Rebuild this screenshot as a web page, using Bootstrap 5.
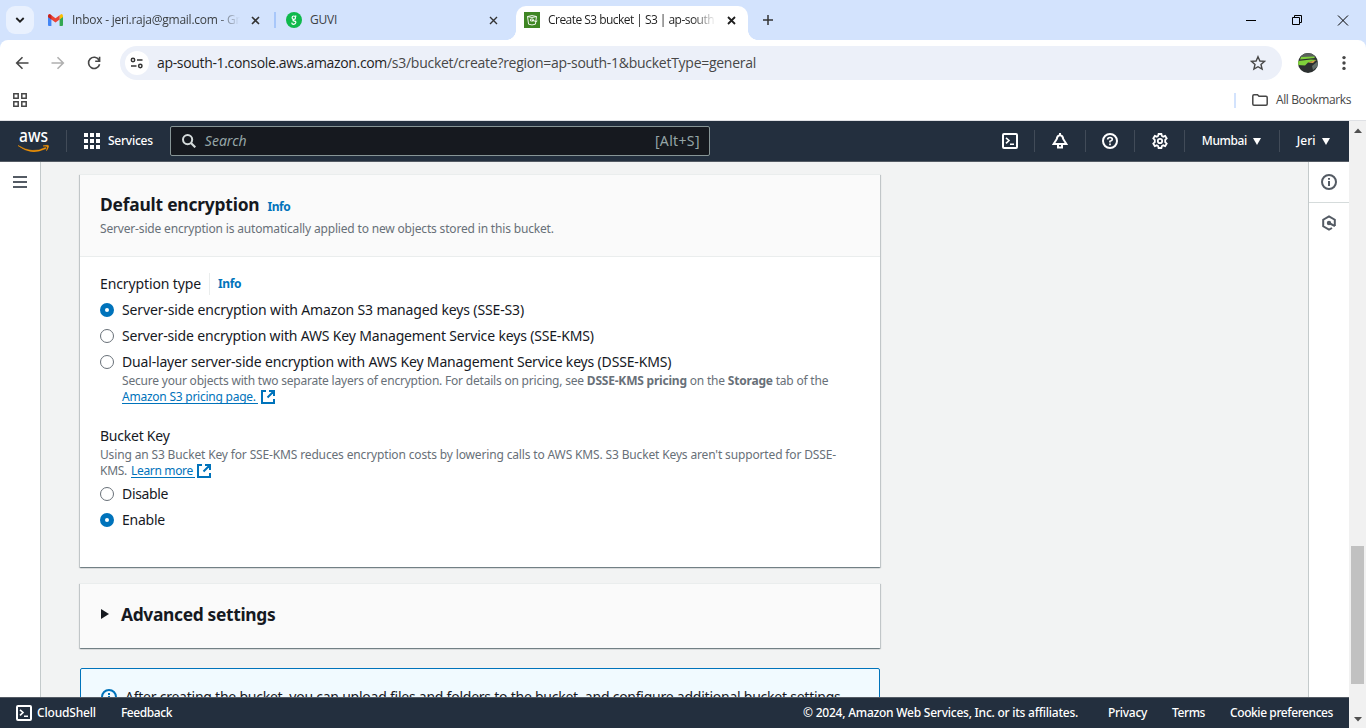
<!DOCTYPE html>
<html lang="en">
<head>
<meta charset="utf-8">
<title>Create S3 bucket</title>
<link href="https://cdn.jsdelivr.net/npm/bootstrap@5.3.0/dist/css/bootstrap.min.css" rel="stylesheet">
<style>
html,body{height:728px;overflow:hidden}
body{width:1366px;font-family:"Noto Sans",sans-serif;font-size:14px;line-height:22px;color:#16191f;background:#fff}
svg{display:block;flex:none}
span,a{white-space:nowrap}
/* browser frame */
.chrome-ui{font-family:"Open Sans",sans-serif;color:#1f1f1f}
.tabstrip{height:40px;background:#d3e3fd;font-size:12px}
.tabmenu{width:28px;height:28px;border-radius:9px;background:#e9f1fe;margin:6px 0 0 6px}
.tab-item{height:40px;width:241px;color:#3c4043}
.tab-on{width:232px;height:34px;margin-top:6px;padding:0 0 6px 8px;background:#fff;border-radius:10px 10px 0 0;position:relative}
.tab-on::before,.tab-on::after{content:"";position:absolute;bottom:0;width:10px;height:10px}
.tab-on::before{left:-10px;background:radial-gradient(circle at 0 0,#d3e3fd 9.6px,#fff 10.2px)}
.tab-on::after{right:-10px;background:radial-gradient(circle at 100% 0,#d3e3fd 9.6px,#fff 10.2px)}
.tab-sep{width:2px;height:16px;background:#a8c7fa;margin:0 10px 0 -1px}
.fade-txt{width:168px;overflow:hidden;-webkit-mask-image:linear-gradient(90deg,#000 86%,transparent);mask-image:linear-gradient(90deg,#000 86%,transparent)}
.toolbar{height:46px;background:#d3e3fd}
.toolbar-in{background:#fff;border-radius:8px 8px 0 0}
.omni{width:1162px;height:34px;border-radius:17px;background:#ecf0f9;font-size:14px}
.site-btn{width:24px;height:24px;border-radius:50%;background:#fff;margin-left:5px}
.bookbar{height:35px;border-bottom:1px solid #dfe1e5;font-size:12px;color:#474747}
/* console bars */
.aws-top{height:41px;background:#232f3e;border-bottom:1px solid #545b64;color:#fff;font-size:12px;font-weight:500}
.vsep{width:1px;height:22px;background:#414b58}
.aws-search{width:540px;height:30px;margin-left:17px;background:#16191f;border:1px solid #879596;border-radius:2px;color:#95a5a6;font-size:14px;font-weight:400}
.aws-foot{height:31px;background:#232f3e;border-top:1px solid #545b64;color:#fff;font-size:12px;font-weight:500}
.page-col{width:1349px}
.side-l{width:41px;border-right:1px solid #c4cacb}
.side-r{width:41px;border-left:1px solid #c4cacb}
/* form */
.work{background:#f2f3f3;height:535px;overflow:hidden;padding:12px 0 0 39px}
.panel-box{width:800px;background:#fff;border-top:1px solid #eaeded;box-shadow:0 1px 1px 0 rgba(0,28,36,.35),1px 1px 1px 0 rgba(0,28,36,.15),-1px 1px 1px 0 rgba(0,28,36,.15)}
.panel-head{background:#fafafa;border-bottom:1px solid #eaeded;height:82px;padding:18px 20px}
.t18{font-size:17.4px;font-weight:700;line-height:22px}
.hint{font-size:12px;line-height:16px;color:#687078}
.info-l{font-size:12px;font-weight:700;color:#0073bb;letter-spacing:-.4px}
.lnk{color:#0073bb;border-bottom:1px solid #0073bb;height:15px;line-height:16px;display:inline-block}
.rad{width:14px;height:14px;border-radius:50%;border:1px solid #687078;background:#fff;flex:none}
.rad.on{border:5px solid #0073bb}
.opt{height:22px;margin-bottom:4px;gap:8px}
.note-box{width:800px;height:60px;margin-top:20px;border:1px solid #0073bb;background:#f1faff;border-radius:2px;padding:17px 20px}
.sbar{width:17px;background:#f1f1f1}
.thumb{width:13px;height:138px;margin-top:413px;background:#c1c1c1}
/* tracking */
.k08{letter-spacing:-.08px}.k12{letter-spacing:-.122px}.k14{letter-spacing:-.143px}.k148{letter-spacing:-.148px}.k16{letter-spacing:-.163px}
.k17{letter-spacing:-.171px}.k20{letter-spacing:-.203px}.k22{letter-spacing:-.22px}.k24{letter-spacing:-.238px}.k275{letter-spacing:-.275px}
.k30{letter-spacing:-.3px}.k33{letter-spacing:-.334px}.k38{letter-spacing:-.383px}.k42{letter-spacing:-.415px}.k54{letter-spacing:-.539px}
.p35{letter-spacing:.35px}
</style>
</head>
<body>
<div class="chrome-ui">
 <div class="tabstrip d-flex">
  <div class="tabmenu d-flex align-items-center justify-content-center"><svg width="10" height="8" viewBox="0 0 10 8"><path d="M1.300 2 5 5.700 8.700 2" fill="none" stroke="#1f1f1f" stroke-width="1.800"/></svg></div>
  <div class="tab-item d-flex align-items-center" style="padding-left:14px">
   <svg width="15" height="12" viewBox="0 0 15 12"><path d="M0 2v9q0 1 1 1h2.400V5z" fill="#4285f4"/><path d="M15 2v9q0 1-1 1h-2.400V5z" fill="#34a853"/><path d="M11.600 1.200V5.600L15 3V1.800Q14.600-.7 12.600.4z" fill="#fbbc04"/><path d="M0 3V1.800Q.4-.7 2.400.4L7.500 4.200 11.600 1.200V5.600L7.500 8.600 3.400 5.600z" fill="#ea4335"/><path d="M0 3V1.800Q.4 0 2 .2L3.400 1.200V5.600z" fill="#c5221f"/></svg>
   <div class="fade-txt k24" style="margin-left:9px"><span>Inbox - jeri.raja@gmail.com - Gm</span></div>
   <svg style="margin-left:11px" width="9" height="9" viewBox="0 0 9 9"><path d="M1 1 8 8M8 1 1 8" stroke="#333" stroke-width="1.600"/></svg>
  </div>
  <div class="tab-item d-flex align-items-center">
   <div class="tab-sep"></div>
   <svg width="16" height="16" viewBox="0 0 16 16"><circle cx="8" cy="8" r="8" fill="#0fb94c"/><g fill="none" stroke="#fff" stroke-width="1.200"><circle cx="7.800" cy="5.700" r="1.700"/><path d="M9.200 4.600 10.300 3.800M7.800 7.600q-1.600 1 0 1.300 2.200.3 2 1.800-.4 1.600-2.100 1.600-1.800 0-2-1.700"/></g></svg>
   <span class="k24 ms-2">GUVI</span>
   <svg style="margin-left:152px" width="9" height="9" viewBox="0 0 9 9"><path d="M1 1 8 8M8 1 1 8" stroke="#333" stroke-width="1.400"/></svg>
  </div>
  <div class="tab-on d-flex align-items-center">
   <svg width="16" height="16" viewBox="0 0 16 16"><rect width="16" height="16" fill="#3f8624"/><path d="M3.500 4.500Q8 2.600 12.500 4.500L11.400 12.200Q8 13.700 4.600 12.200zM3.500 4.600Q8 6.400 12.300 4.600M8 8.300 12.600 9.600 13 8.600M6.600 7h2.600v2H6.600z" fill="none" stroke="#fff" stroke-width=".9"/></svg>
   <div class="fade-txt k54 ms-2"><span>Create S3 bucket | S3 | ap-south</span></div>
   <svg style="margin-left:11px" width="9" height="9" viewBox="0 0 9 9"><path d="M1 1 8 8M8 1 1 8" stroke="#1f1f1f" stroke-width="1.800"/></svg>
  </div>
  <svg style="margin:15px 0 0 15px" width="10" height="10" viewBox="0 0 10 10"><path d="M5 0V10M0 5H10" stroke="#333" stroke-width="1.500"/></svg>
  <svg class="ms-auto" width="120" height="40" viewBox="0 0 120 40" fill="none" stroke="#000"><path d="M0 20.500H10M46.500 17.500h7v7h-7zM48.500 17.500v-2h7v7h-2M92 15.500l10 10M102 15.500l-10 10"/></svg>
 </div>
 <div class="toolbar"><div class="toolbar-in h-100 d-flex align-items-center">
  <svg width="120" height="46" viewBox="0 0 120 46" fill="none" stroke-width="1.600"><path d="M28.500 23H17M22.500 17.200 16.700 23l5.800 5.800" stroke="#474747"/><path d="M51.500 23H63M57.500 17.200 63.300 23l-5.800 5.800" stroke="#b0b0b0"/><path d="M99 20A5.600 5.600 0 1 0 99.600 24.200M99.600 16.800V21.200H95.200" stroke="#474747"/></svg>
  <div class="omni d-flex align-items-center">
   <div class="site-btn d-flex align-items-center justify-content-center"><svg width="14" height="12" viewBox="0 0 14 12" fill="none" stroke="#333" stroke-width="1.500"><circle cx="3" cy="3" r="1.700"/><path d="M7 3h5.500M1 9h5.500"/><circle cx="10.300" cy="9" r="1.700"/></svg></div>
   <span class="k33 ms-2">ap-south-1.console.aws.amazon.com</span><span class="k275" style="color:#474747">/s3/bucket/create?region=ap-south-1&amp;bucketType=general</span>
   <svg class="ms-auto me-3" width="16" height="16" viewBox="0 0 16 16"><path d="M8 1.700 9.900 6l4.700.4-3.600 3.100 1.100 4.600L8 11.700 3.900 14.100 5 9.500 1.400 6.400 6.100 6z" fill="none" stroke="#474747" stroke-width="1.400"/></svg>
  </div>
  <svg style="margin-left:15px" width="22" height="22" viewBox="0 0 22 22"><defs><clipPath id="av"><circle cx="11" cy="11" r="10"/></clipPath></defs><g clip-path="url(#av)"><path fill="#2c3030" d="M0 0h22v22H0z"/><path fill="#59615b" d="M0 0h22v5H0z"/><path fill="#7fd13b" d="M4 5 17 4.500 18 6 3 7.500zM1 9 14 7.500 20 8 11 10.500 8 13.500 1 13z"/><path fill="#d9a24b" d="M11 10.500 19 8 16 11z"/><path fill="#63706a" d="M15 14l6-5v5l-5 4z"/></g></svg>
  <svg style="margin-left:22px" width="6" height="16" viewBox="0 0 6 16" fill="#474747"><circle cx="3" cy="2.600" r="1.700"/><circle cx="3" cy="8" r="1.700"/><circle cx="3" cy="13.400" r="1.700"/></svg>
 </div></div>
 <div class="bookbar d-flex">
  <svg style="margin:7px 0 0 13px" width="14" height="14" viewBox="0 0 14 14" fill="none" stroke="#474747" stroke-width="1.500"><path d="M.8.8h4.400v4.400H.8zM8.800.8h4.400v4.400H8.800zM.8 8.800h4.400v4.400H.8zM8.800 8.800h4.400v4.400H8.800z"/></svg>
  <div class="ms-auto d-flex align-items-center" style="height:28px;width:132px">
   <div style="width:2px;height:15px;background:#d3e3fd"></div>
   <svg class="ms-3" width="16" height="12" viewBox="0 0 16 12"><path d="M.8 10V2Q.8.800 2 .800H5.500L7 2.300h7q1.200 0 1.200 1.200V10q0 1.200-1.200 1.200H2Q.8 11.200.8 10z" fill="none" stroke="#474747" stroke-width="1.500"/></svg>
   <span class="k38 ms-2">All Bookmarks</span>
  </div>
 </div>
</div>
<div class="d-flex" style="height:607px">
 <div class="page-col">
  <div class="aws-top d-flex align-items-center">
   <svg style="margin-left:17px" width="33" height="24" viewBox="0 0 33 24"><text x="2" y="13" font-family="Noto Sans" font-weight="500" font-size="18" textLength="29" lengthAdjust="spacingAndGlyphs" fill="#fff">aws</text><path d="M1 16.500Q15.500 25.500 28.500 18.500L29 19.600Q14 27 1 16.500zM26 17q5-1.200 5.500-.3.500 1.200-2 5 1.200-3.600.7-4.200-.7-.6-4.200-.5z" fill="#ff9900" stroke="#ff9900" stroke-width=".5"/></svg>
   <div class="vsep ms-3"></div>
   <svg style="margin-left:17px" width="16" height="16" viewBox="0 0 16 16" fill="#fff"><path d="M0 0h4v4H0zM6 0h4v4H6zM12 0h4v4h-4zM0 6h4v4H0zM6 6h4v4H6zM12 6h4v4h-4zM0 12h4v4H0zM6 12h4v4H6zM12 12h4v4h-4z"/></svg>
   <span class="k24 ms-2">Services</span>
   <div class="aws-search d-flex align-items-center">
    <svg style="margin-left:11px" width="14" height="14" viewBox="0 0 14 14"><circle cx="5.600" cy="5.600" r="4.600" fill="none" stroke="#d5dbdb" stroke-width="2"/><path d="M9 9l4.300 4.300" stroke="#d5dbdb" stroke-width="2.200"/></svg>
    <span class="fst-italic" style="margin-left:9px">Search</span><span class="ms-auto p35" style="margin-right:9px">[Alt+S]</span>
   </div>
   <svg style="margin-left:292px" width="16" height="16" viewBox="0 0 16 16" fill="none" stroke="#fff" stroke-width="2"><rect x="1" y="1" width="14" height="14" rx="1"/><path d="M4 4.800 7 7.500 4 10.300M8 11.200h4" stroke-width="1.600"/></svg>
   <div class="vsep ms-3"></div>
   <svg style="margin-left:17px" width="16" height="16" viewBox="0 0 16 16" fill="none" stroke="#fff" stroke-width="2"><path d="M8 0v2M8 2Q5 2.800 4.800 6L1.600 11H14.400L11.200 6Q11 2.800 8 2zM6 11.500V14.500H10V11.500"/></svg>
   <div class="vsep" style="margin-left:17px"></div>
   <svg class="ms-3" width="16" height="16" viewBox="0 0 16 16" fill="none" stroke="#fff" stroke-width="2"><circle cx="8" cy="8" r="7"/><path d="M5.700 6.500Q5.700 4.500 8 4.500t2.300 2Q10.300 7.700 8 8.300V9.500M8 10.600v1.600" stroke-width="1.700"/></svg>
   <div class="vsep ms-3"></div>
   <svg style="margin-left:17px" width="16" height="16" viewBox="0 0 16 16" fill="none" stroke="#fff" stroke-width="1.800"><path d="M6.600 1h2.800l.5 2 1.300.7 2-.8 1.500 2.400L13.200 6.900v2.200l1.500 1.600-1.500 2.400-2-.8-1.300.7-.5 2H6.600l-.5-2-1.300-.7-2 .8L1.300 10.700 2.800 9.100V6.900L1.300 5.300 2.800 2.900l2 .8L6.100 3z"/><circle cx="8" cy="8" r="2.200"/></svg>
   <div class="vsep ms-3"></div>
   <span class="k42" style="margin-left:17px">Mumbai</span>
   <svg style="margin-left:6px" width="8" height="7" viewBox="0 0 8 7" fill="#fff"><path d="M0 0h8L4 7z"/></svg>
   <div class="vsep" style="margin-left:18px"></div>
   <span style="margin-left:17px">Jeri</span>
   <svg style="margin-left:6px" width="8" height="7" viewBox="0 0 8 7" fill="#fff"><path d="M0 0h8L4 7z"/></svg>
  </div>
  <div class="d-flex">
   <div class="side-l"><svg style="margin:14px 0 0 13px" width="14" height="12" viewBox="0 0 14 12"><path d="M0 1h14M0 6h14M0 11h14" stroke="#545b64" stroke-width="2"/></svg></div>
   <div class="work flex-grow-1">
    <section class="panel-box" style="height:393px">
     <div class="panel-head">
      <div class="d-flex align-items-baseline"><span class="t18 k20">Default encryption</span><span class="info-l ms-2">Info</span></div>
      <div class="hint" style="margin-top:3px"><span class="k17">Server-side encryption is automatically applied to new objects stored in this bucket.</span></div>
     </div>
     <div style="padding:16px 20px 0">
      <div class="d-flex align-items-center mb-1"><span class="k12">Encryption type</span><div style="width:1px;height:22px;background:#eaeded;margin:0 8px"></div><span class="info-l">Info</span></div>
      <div class="opt d-flex align-items-center"><i class="rad on"></i><span class="k14">Server-side encryption with Amazon S3 managed keys (SSE-S3)</span></div>
      <div class="opt d-flex align-items-center"><i class="rad"></i><span class="k16">Server-side encryption with AWS Key Management Service keys (SSE-KMS)</span></div>
      <div class="opt d-flex align-items-center mb-0"><i class="rad"></i><span class="k17">Dual-layer server-side encryption with AWS Key Management Service keys (DSSE-KMS)</span></div>
      <div class="hint" style="margin-left:22px">
       <div class="k20"><span>Secure your objects with two separate layers of encryption. For details on pricing, see</span> <b>DSSE-KMS pricing</b> <span>on the</span> <b>Storage</b> <span>tab of the</span></div>
       <div class="d-flex"><a class="lnk k24 text-decoration-none" style="padding-right:2px">Amazon S3 pricing page.</a><svg style="margin:1px 0 0 3px" width="14" height="14" viewBox="0 0 14 14" fill="none" stroke="#0073bb" stroke-width="2"><path d="M5 1H1v12h12V9M8 1h5v5M13 1 6.500 7.500"/></svg></div>
      </div>
      <div style="margin-top:21px"><span class="k24">Bucket Key</span></div>
      <div class="hint">
       <div><span class="k148">Using an S3 Bucket Key for SSE-KMS reduces encryption costs by lowering calls to AWS KMS. S3 Bucket Keys aren't supported for DSSE-</span></div>
       <div class="d-flex"><span class="k275">KMS.</span><a class="lnk k33 ms-1 text-decoration-none" style="padding-right:2px">Learn more</a><svg style="margin:1px 0 0 2px" width="14" height="14" viewBox="0 0 14 14" fill="none" stroke="#0073bb" stroke-width="2"><path d="M5 1H1v12h12V9M8 1h5v5M13 1 6.500 7.500"/></svg></div>
      </div>
      <div class="opt d-flex align-items-center mt-1"><i class="rad"></i><span class="k33">Disable</span></div>
      <div class="opt d-flex align-items-center"><i class="rad on"></i><span class="k24">Enable</span></div>
     </div>
    </section>
    <section class="panel-box d-flex align-items-center" style="height:65px;margin-top:16px;background:#fafafa;padding:0 0 5px 21px">
     <svg width="8" height="10" viewBox="0 0 8 10"><path d="M0 0v10L8 5z" fill="#16191f"/></svg><span class="t18 k33" style="margin-left:12px">Advanced settings</span>
    </section>
    <div class="note-box d-flex"><svg style="margin-top:3px" width="16" height="16" viewBox="0 0 16 16" fill="none" stroke="#0073bb" stroke-width="2"><circle cx="8" cy="8" r="7"/><path d="M8 4v2M8 7v5"/></svg><span class="k24 ms-2">After creating the bucket, you can upload files and folders to the bucket, and configure additional bucket settings.</span></div>
   </div>
   <div class="side-r">
    <div style="height:41px;border-bottom:1px solid #d5dbdb;padding:12px"><svg width="16" height="16" viewBox="0 0 16 16" fill="none" stroke="#545b64" stroke-width="2"><circle cx="8" cy="8" r="7"/><path d="M8 4v1.800M8 7v5"/></svg></div>
    <div style="padding:12px"><svg width="16" height="16" viewBox="0 0 16 16" fill="none" stroke="#545b64" stroke-width="2"><path d="M13.800 11V4.700L8 1.300 2.200 4.700v6.600L8 14.700l3-1.700"/><path d="M8 8l6 3.200"/><circle cx="8" cy="8" r="1.200" fill="#545b64"/></svg></div>
   </div>
  </div>
  <div class="aws-foot d-flex align-items-center">
   <svg class="ms-3" width="16" height="16" viewBox="0 0 16 16" fill="none" stroke="#fff" stroke-width="2"><rect x="1" y="1" width="14" height="14" rx="1"/><path d="M4 4.800 7 7.500 4 10.300M8 11.200h4" stroke-width="1.600"/></svg>
   <span class="k17" style="margin-left:5px">CloudShell</span><span class="k42" style="margin-left:25px">Feedback</span>
   <span class="ms-auto k24">© 2024, Amazon Web Services, Inc. or its affiliates.</span><span class="k30" style="margin-left:30px">Privacy</span><span class="k42" style="margin-left:25px">Terms</span><span class="k42" style="margin:0 16px 0 25px">Cookie preferences</span>
  </div>
 </div>
 <div class="sbar d-flex flex-column align-items-center">
  <svg style="margin-top:7px" width="8" height="5" viewBox="0 0 8 5"><path d="M0 5 4 .5 8 5z" fill="#505050"/></svg>
  <div class="thumb"></div>
  <svg style="margin-top:33px" width="8" height="5" viewBox="0 0 8 5"><path d="M0 0 4 4.500 8 0z" fill="#505050"/></svg>
 </div>
</div>
<script src="https://cdn.jsdelivr.net/npm/bootstrap@5.3.0/dist/js/bootstrap.bundle.min.js"></script>
</body>
</html>
